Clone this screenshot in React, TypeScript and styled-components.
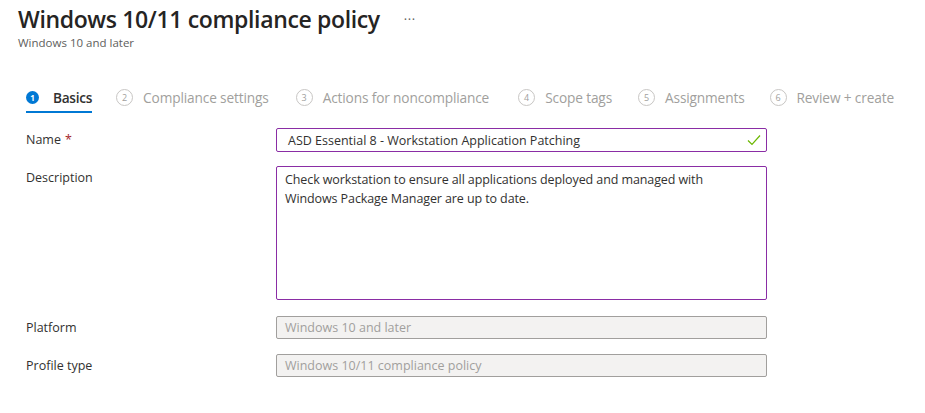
import React from "react";
import styled, { createGlobalStyle } from "styled-components";

const Global = createGlobalStyle`
  html, body { margin: 0; padding: 0; background: #ffffff; }
  body { font-family: "Open Sans", "Noto Sans", sans-serif; color: #323130; }
  * { box-sizing: border-box; }
`;

const Page = styled.div`
  width: 925px;
  height: 413px;
  overflow: hidden;
  background: #fff;
`;

const Header = styled.header`
  padding: 2px 0 0 18px;
`;

const TitleRow = styled.div`
  display: flex;
  align-items: center;
  gap: 24px;
  height: 34px;
`;

const Title = styled.h1`
  margin: 0;
  font-size: 23px;
  font-weight: 600;
  color: #252423;
  letter-spacing: -0.35px;
  white-space: nowrap;
`;

const More = styled.span`
  font-size: 13px;
  color: #605e5c;
  letter-spacing: 0.5px;
`;

const Subtitle = styled.div`
  font-size: 11.5px;
  color: #605e5c;
  line-height: 14px;
`;

const Steps = styled.nav`
  display: flex;
  align-items: flex-start;
  padding: 0 0 0 26px;
  margin-top: 33px;
  height: 38px;
`;

const Step = styled.div<{ $active?: boolean; $gap: number }>`
  display: flex;
  align-items: center;
  gap: ${(p) => (p.$active ? 14 : 10)}px;
  margin-right: ${(p) => p.$gap}px;
  height: 29px;
  position: relative;
  ${(p) =>
    p.$active &&
    `&::after {
      content: "";
      position: absolute;
      left: 0;
      right: 0;
      bottom: -1px;
      height: 2px;
      background: #0078d4;
    }`}
`;

const Badge = styled.span<{ $active?: boolean }>`
  display: inline-flex;
  align-items: center;
  justify-content: center;
  width: ${(p) => (p.$active ? 13 : 17)}px;
  height: ${(p) => (p.$active ? 13 : 17)}px;
  border-radius: 50%;
  font-size: ${(p) => (p.$active ? 8 : 9)}px;
  font-weight: ${(p) => (p.$active ? 700 : 400)};
  color: ${(p) => (p.$active ? "#fff" : "#a19f9d")};
  background: ${(p) => (p.$active ? "#0078d4" : "transparent")};
  border: ${(p) => (p.$active ? "none" : "1px solid #c8c6c4")};
  line-height: 1;
`;

const StepLabel = styled.span<{ $active?: boolean }>`
  font-size: 13.7px;
  font-weight: ${(p) => (p.$active ? 600 : 400)};
  color: ${(p) => (p.$active ? "#323130" : "#a19f9d")};
  white-space: nowrap;
  letter-spacing: ${(p) => (p.$active ? "-0.3px" : "-0.15px")};
`;

const Form = styled.form`
  display: flex;
  flex-direction: column;
  padding: 7px 0 0 26px;
`;

const Row = styled.div<{ $mt: number }>`
  display: grid;
  grid-template-columns: 250px 491px;
  margin-top: ${(p) => p.$mt}px;
`;

const Label = styled.label`
  font-size: 12.5px;
  color: #323130;
  padding-top: 4px;
  line-height: 16px;
`;

const Required = styled.span`
  color: #a4262c;
  margin-left: 4px;
`;

const Field = styled.div<{ $disabled?: boolean; $h: number }>`
  position: relative;
  height: ${(p) => p.$h}px;
  border: 1px solid ${(p) => (p.$disabled ? "#a19f9d" : "#8a2da5")};
  border-radius: 2px;
  background: ${(p) => (p.$disabled ? "#f3f2f1" : "#fff")};
  color: ${(p) => (p.$disabled ? "#a19f9d" : "#323130")};
  font-size: 12.5px;
  line-height: 19px;
  padding: ${(p) => (p.$disabled ? "1px 8px" : "1px 11px")};
  display: flex;
  align-items: ${(p) => (p.$h > 40 ? "flex-start" : "center")};
`;

const AreaText = styled.div`
  padding-top: 2px;
  margin-left: -3px;
  letter-spacing: -0.1px;
`;

const Check = styled.svg`
  position: absolute;
  right: 5px;
  top: 50%;
  transform: translateY(-50%);
`;

const steps = [
  { n: 1, label: "Basics", gap: 24 },
  { n: 2, label: "Compliance settings", gap: 27 },
  { n: 3, label: "Actions for noncompliance", gap: 29 },
  { n: 4, label: "Scope tags", gap: 26 },
  { n: 5, label: "Assignments", gap: 25 },
  { n: 6, label: "Review + create", gap: 0 },
];

export default function App() {
  return (
    <Page>
      <Global />
      <Header>
        <TitleRow>
          <Title>Windows 10/11 compliance policy</Title>
          <More>···</More>
        </TitleRow>
        <Subtitle>Windows 10 and later</Subtitle>
      </Header>
      <Steps>
        {steps.map((s) => (
          <Step key={s.n} $active={s.n === 1} $gap={s.gap}>
            <Badge $active={s.n === 1}>{s.n}</Badge>
            <StepLabel $active={s.n === 1}>{s.label}</StepLabel>
          </Step>
        ))}
      </Steps>
      <Form>
        <Row $mt={0}>
          <Label>
            Name<Required>*</Required>
          </Label>
          <Field $h={24}>
            ASD Essential 8 - Workstation Application Patching
            <Check width="14" height="12" viewBox="0 0 14 12">
              <path d="M1 6.5 L5 10.5 L13 1.5" fill="none" stroke="#6bb700" strokeWidth="1.2" />
            </Check>
          </Field>
        </Row>
        <Row $mt={14}>
          <Label>Description</Label>
          <Field $h={134}>
            <AreaText>
              Check workstation to ensure all applications deployed and managed with
              <br />
              Windows Package Manager are up to date.
            </AreaText>
          </Field>
        </Row>
        <Row $mt={16}>
          <Label>Platform</Label>
          <Field $h={23} $disabled>
            Windows 10 and later
          </Field>
        </Row>
        <Row $mt={15}>
          <Label>Profile type</Label>
          <Field $h={23} $disabled>
            Windows 10/11 compliance policy
          </Field>
        </Row>
      </Form>
    </Page>
  );
}
